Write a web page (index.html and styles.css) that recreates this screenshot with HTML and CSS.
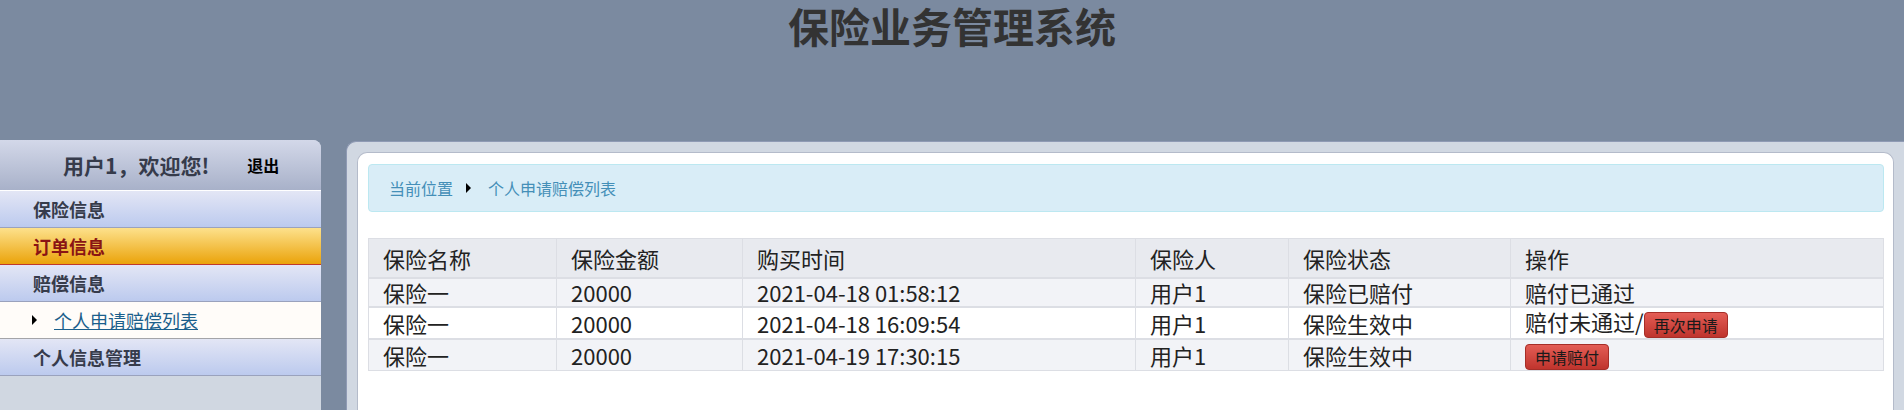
FILE: index.html
```html
<!DOCTYPE html>
<html lang="zh-CN">

<head>
  <meta charset="UTF-8">
  <title>保险业务管理系统</title>
  <link rel="stylesheet" href="styles.css">
</head>

<body>
  <div class="header">
    <h1 class="title">保险业务管理系统</h1>
  </div>

  <div class="main">
    <div class="sidebar">
      <div class="user_bar">
        <span class="welcome">用户1，欢迎您!</span>
        <a class="logout" href="#">退出</a>
      </div>
      <div class="menu_item">保险信息</div>
      <div class="menu_item active">订单信息</div>
      <div class="menu_item">赔偿信息</div>
      <div class="sub_item"><span class="arrow"></span><a href="#">个人申请赔偿列表</a></div>
      <div class="menu_item">个人信息管理</div>
    </div>

    <div class="content">
      <div class="panel">
        <div class="crumb">
          <span>当前位置</span>
          <span class="arrow crumb_arrow"></span>
          <span>个人申请赔偿列表</span>
        </div>

        <table class="list">
          <colgroup>
            <col style="width:188px">
            <col style="width:186px">
            <col style="width:393px">
            <col style="width:153px">
            <col style="width:222px">
            <col>
          </colgroup>
          <thead>
            <tr>
              <th>保险名称</th>
              <th>保险金额</th>
              <th>购买时间</th>
              <th>保险人</th>
              <th>保险状态</th>
              <th>操作</th>
            </tr>
          </thead>
          <tbody>
            <tr>
              <td>保险一</td>
              <td>20000</td>
              <td>2021-04-18 01:58:12</td>
              <td>用户1</td>
              <td>保险已赔付</td>
              <td>赔付已通过</td>
            </tr>
            <tr>
              <td>保险一</td>
              <td>20000</td>
              <td>2021-04-18 16:09:54</td>
              <td>用户1</td>
              <td>保险生效中</td>
              <td>赔付未通过/<button class="btn_red">再次申请</button></td>
            </tr>
            <tr>
              <td>保险一</td>
              <td>20000</td>
              <td>2021-04-19 17:30:15</td>
              <td>用户1</td>
              <td>保险生效中</td>
              <td><button class="btn_red">申请赔付</button></td>
            </tr>
          </tbody>
        </table>
      </div>
    </div>
  </div>
</body>

</html>
```

FILE: styles.css
```css
html,
body {
  width: 100%;
  height: 100%;
  overflow: hidden;
}

body {
  margin: 0;
  background-color: #7b8aa0;
  font-family: 'Noto Sans CJK SC', 'Noto Sans', sans-serif;
  color: #222;
}

.header {
  height: 140px;
}

.title {
  margin: 0;
  text-align: center;
  font-size: 41px;
  line-height: 50px;
  font-weight: bold;
  color: #333;
}

.main {
  display: flex;
  height: 270px;
}

.sidebar {
  width: 321px;
  flex: none;
  background-color: #d0d7e1;
  border-top-right-radius: 8px;
  overflow: hidden;
}

.user_bar {
  height: 50px;
  display: flex;
  align-items: center;
  padding-left: 63px;
  background: linear-gradient(#d3d8e9, #a8b1c9);
  border-bottom: 1px solid #fff;
}

.welcome {
  font-size: 21px;
  font-weight: bold;
  color: #363b4b;
}

.logout {
  margin-left: 38px;
  font-size: 16px;
  font-weight: bold;
  color: #000;
  text-decoration: none;
}

.menu_item {
  height: 36px;
  line-height: 36px;
  padding-left: 33px;
  font-size: 18px;
  font-weight: bold;
  color: #363b4b;
  background: linear-gradient(#e3e6f5, #bccaee);
  border-bottom: 1px solid #9aa2bd;
}

.menu_item.active {
  color: #8a1414;
  background: linear-gradient(#fde18c, #eba30a);
  border-bottom-color: #c0392b;
}

.sub_item {
  height: 36px;
  display: flex;
  align-items: center;
  padding-left: 32px;
  background-color: #fffcf9;
  border-bottom: 1px solid #a4a4a8;
  font-size: 18px;
}

.sub_item a {
  margin-left: 17px;
  color: #1b5f8c;
}

.arrow {
  display: inline-block;
  width: 0;
  height: 0;
  border-top: 5px solid transparent;
  border-bottom: 5px solid transparent;
  border-left: 5px solid #000;
}

.content {
  flex: 1;
  margin-left: 25px;
  margin-top: 1px;
  padding: 10px 10px 0 10px;
  background-color: #d1d8e2;
  border: 1px solid #8f9ab4;
  border-right: none;
  border-bottom: none;
  border-radius: 10px 0 0 0;
}

.panel {
  height: 100%;
  box-sizing: border-box;
  padding: 11px 9px 0 10px;
  background-color: #fff;
  border: 1px solid #b4bbca;
  border-bottom: none;
  border-radius: 10px 10px 0 0;
}

.crumb {
  height: 46px;
  display: flex;
  align-items: center;
  padding-left: 20px;
  background-color: #d9edf7;
  border: 1px solid #bce8f1;
  border-radius: 4px;
  font-size: 16px;
  color: #448fb8;
}

.crumb_arrow {
  margin: 0 17px 0 13px;
}

.list {
  width: 100%;
  margin-top: 26px;
  border-collapse: collapse;
  table-layout: fixed;
  font-size: 22px;
}

.list th,
.list td {
  border: 1px solid #dcdee4;
  padding: 0 14px;
  text-align: left;
  font-weight: normal;
  white-space: nowrap;
}

.list th {
  height: 38px;
  background-color: #e8eaef;
}

.list td {
  height: 27px;
  line-height: 27px;
}

.list tbody tr {
  background-color: #f2f3f7;
  border-top: 2px solid #dcdee4;
}

.list tbody tr:nth-child(2) {
  background-color: #fff;
}

.btn_red {
  height: 26px;
  padding: 0 9px;
  vertical-align: middle;
  font-family: inherit;
  font-size: 16px;
  line-height: 24px;
  color: #1a1a1a;
  background: linear-gradient(#e35d55, #bf342d);
  border: 1px solid #a52e28;
  border-radius: 4px;
}
```
